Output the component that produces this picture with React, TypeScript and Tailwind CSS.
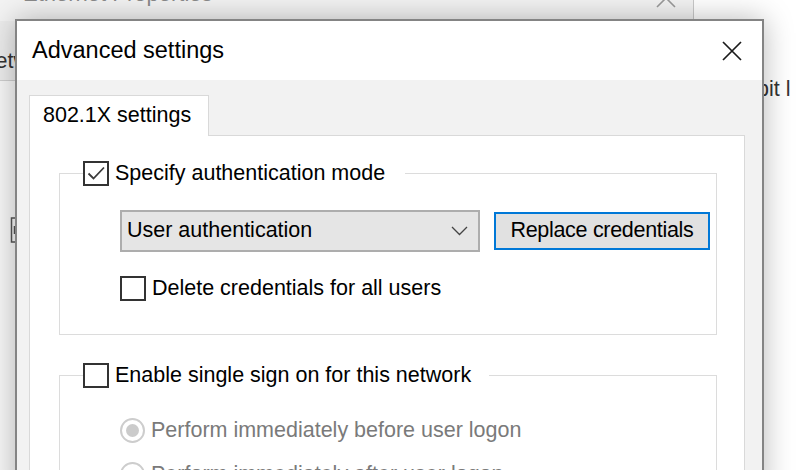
import React from "react";

function CheckBox({ checked }: { checked?: boolean }) {
  return (
    <span className="flex h-[25px] w-[26px] shrink-0 items-center justify-center border-2 border-[#333333] bg-white">
      {checked && (
        <svg width="21" height="21" viewBox="0 0 21 21">
          <path d="M2.5 10.5 L7.5 15.5 L18 4.5" fill="none" stroke="#3a3a3a" strokeWidth="1.8" />
        </svg>
      )}
    </span>
  );
}

function Radio({ checked }: { checked?: boolean }) {
  return (
    <span className="flex h-[25px] w-[25px] shrink-0 items-center justify-center rounded-full border-2 border-[#cdcdcd] bg-white">
      {checked && <span className="h-[13px] w-[13px] rounded-full bg-[#cbcbcb]" />}
    </span>
  );
}

export default function App() {
  return (
    <div className="relative h-[470px] w-[796px] overflow-hidden bg-white font-['Liberation_Sans',Arial,sans-serif] text-[21.5px] text-black">
      {/* background window: Ethernet Properties */}
      <div className="absolute left-[-20px] top-[-40px] flex h-[600px] w-[714px] flex-col border border-[#c9c9c9] bg-[#f5f5f5]">
        <div className="relative h-[60px] shrink-0 bg-[#f3f3f3]">
          <span className="absolute left-[42px] top-[22px] text-[22px] leading-[22px] text-[#8a8a8a]">Ethernet Properties</span>
          <svg className="absolute left-[675px] top-[27px]" width="20" height="20" viewBox="0 0 20 20">
            <path d="M1 1 L19 19 M19 1 L1 19" stroke="#9a9a9a" strokeWidth="1.6" />
          </svg>
        </div>
        <div className="flex h-[60px] shrink-0 items-center border-b border-[#cfcfcf] bg-[#ececec] pt-[20px]">
          <span className="ml-[-1px] leading-[22px] text-[#333]">Networking</span>
        </div>
        <div className="relative flex-1 bg-[#f7f7f7]">
          <svg className="absolute left-[29px] top-[136px]" width="7" height="26" viewBox="0 0 7 26">
            <path d="M6 1 H1.5 V25 H6 M4.5 9 V17" fill="none" stroke="#555" strokeWidth="1.5" />
          </svg>
        </div>
      </div>

      {/* text of a window further behind */}
      <span className="absolute left-[757px] top-[76px] leading-[26px] text-[#333]">bit l</span>

      {/* Advanced settings dialog */}
      <div className="absolute left-[15px] top-[19px] flex h-[480px] w-[749px] flex-col border-2 border-[#848484] bg-[#f2f2f2] shadow-[0_0_28px_rgba(0,0,0,0.28)]">
        <div className="flex h-[59px] shrink-0 items-center justify-between bg-white pl-[15px] pr-[20px]">
          <span className="text-[23.5px] leading-none">Advanced settings</span>
          <svg width="20" height="20" viewBox="0 0 20 20">
            <path d="M1 1 L19 19 M19 1 L1 19" stroke="#1a1a1a" strokeWidth="1.7" />
          </svg>
        </div>
        <div className="flex flex-1 flex-col pl-[12px] pr-[17px] pt-[15px]">
          <div className="relative z-10 -mb-px flex h-[41px] w-[180px] items-center border border-b-0 border-[#d9d9d9] bg-white pl-[13px] leading-none">
            802.1X settings
          </div>
          <div className="flex-1 border border-[#d9d9d9] bg-white pl-[29px] pr-[27px] pt-[24px]">
            <fieldset className="border border-[#dcdcdc]">
              <legend className="ml-[23px] pr-[20px]">
                <span className="flex items-center gap-[6px]">
                  <CheckBox checked />
                  <span className="leading-[26px]">Specify authentication mode</span>
                </span>
              </legend>
              <div className="pb-[33px] pl-[60px] pt-[24px]">
                <div className="flex items-center gap-[14px]">
                  <div className="flex h-[42px] w-[360px] items-center justify-between border-2 border-[#adadad] bg-[#e5e5e5] pl-[5px] pr-[10px]">
                    <span className="leading-none">User authentication</span>
                    <svg width="17" height="10" viewBox="0 0 17 10">
                      <path d="M1 1 L8.5 8.5 L16 1" fill="none" stroke="#444" strokeWidth="1.3" />
                    </svg>
                  </div>
                  <div className="flex h-[38px] w-[216px] items-center justify-center border-2 border-[#0078d7] bg-[#e1e1e1] tracking-[-0.3px]">
                    <span className="leading-none">Replace credentials</span>
                  </div>
                </div>
                <div className="mt-[23px] flex items-center gap-[6px]">
                  <CheckBox />
                  <span className="leading-[26px]">Delete credentials for all users</span>
                </div>
              </div>
            </fieldset>
            <fieldset className="mt-[27px] border border-[#dcdcdc]">
              <legend className="ml-[23px] pr-[18px]">
                <span className="flex items-center gap-[6px]">
                  <CheckBox />
                  <span className="leading-[26px]">Enable single sign on for this network</span>
                </span>
              </legend>
              <div className="flex flex-col gap-[18px] pb-[30px] pl-[60px] pt-[29px] text-[#7a7a7a]">
                <div className="flex items-center gap-[6px]">
                  <Radio checked />
                  <span className="leading-[26px]">Perform immediately before user logon</span>
                </div>
                <div className="flex items-center gap-[6px]">
                  <Radio />
                  <span className="leading-[26px]">Perform immediately after user logon</span>
                </div>
              </div>
            </fieldset>
          </div>
        </div>
      </div>
    </div>
  );
}
